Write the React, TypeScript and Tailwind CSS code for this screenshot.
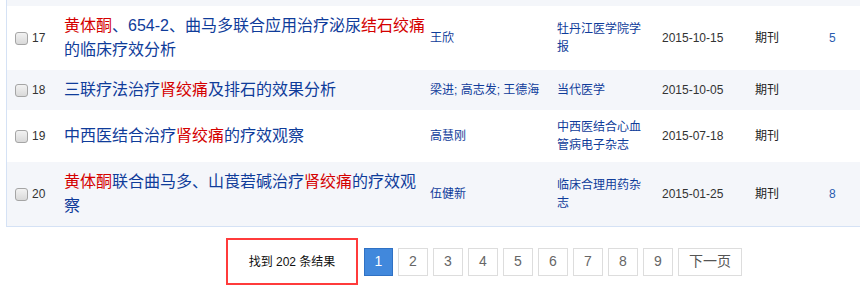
import React from "react";

type Seg = { t: string; red?: boolean };
type Row = {
  n: number;
  title: Seg[];
  author: string;
  journal: string;
  date: string;
  type: string;
  count?: string;
  striped: boolean;
};

const rows: Row[] = [
  {
    n: 17,
    title: [
      { t: "黄体酮", red: true },
      { t: "、654-2、曲马多联合应用治疗泌尿" },
      { t: "结石绞痛", red: true },
      { t: "的临床疗效分析" },
    ],
    author: "王欣",
    journal: "牡丹江医学院学报",
    date: "2015-10-15",
    type: "期刊",
    count: "5",
    striped: false,
  },
  {
    n: 18,
    title: [
      { t: "三联疗法治疗" },
      { t: "肾绞痛", red: true },
      { t: "及排石的效果分析" },
    ],
    author: "梁进; 高志发; 王德海",
    journal: "当代医学",
    date: "2015-10-05",
    type: "期刊",
    striped: true,
  },
  {
    n: 19,
    title: [
      { t: "中西医结合治疗" },
      { t: "肾绞痛", red: true },
      { t: "的疗效观察" },
    ],
    author: "高慧刚",
    journal: "中西医结合心血管病电子杂志",
    date: "2015-07-18",
    type: "期刊",
    striped: false,
  },
  {
    n: 20,
    title: [
      { t: "黄体酮", red: true },
      { t: "联合曲马多、山莨菪碱治疗" },
      { t: "肾绞痛", red: true },
      { t: "的疗效观察" },
    ],
    author: "伍健新",
    journal: "临床合理用药杂志",
    date: "2015-01-25",
    type: "期刊",
    count: "8",
    striped: true,
  },
];

const font = {
  fontFamily: '"Liberation Sans", Arial, "Noto Sans CJK SC", sans-serif',
};

export default function App() {
  return (
    <div className="w-[860px] h-[290px] bg-white overflow-hidden" style={font}>
      <div className="ml-[6px] border-l border-b border-[#d5e2f5]">
        <div className="h-[6px] bg-[#f4f6fa]" />
        {rows.map((r) => (
          <div
            key={r.n}
            className={`flex items-center py-2 ${r.striped ? "bg-[#f4f6fa]" : "bg-white"}`}
          >
            <div className="w-[57px] shrink-0 pl-2 flex items-center gap-[4px]">
              <span className="w-[13px] h-[13px] rounded-[3px] border border-[#a5a5a5] bg-gradient-to-b from-[#f2f2f2] to-[#d9d9d9] shrink-0" />
              <span className="text-[12px] text-[#333]">{r.n}</span>
            </div>
            <div className="w-[366px] shrink-0 pr-[4px] text-[16px] leading-6 text-[#0f3c9a]">
              {r.title.map((s, i) => (
                <span key={i} className={s.red ? "text-[#d40000]" : ""}>
                  {s.t}
                </span>
              ))}
            </div>
            <div className="w-[127px] shrink-0 text-[12px] leading-[18px] text-[#0f3c9a] whitespace-nowrap">
              {r.author}
            </div>
            <div className="w-[105px] shrink-0 pr-[14px] text-[12px] leading-[18px] text-[#0f3c9a]">
              {r.journal}
            </div>
            <div className="w-[93px] shrink-0 text-[12px] leading-[18px] text-[#333]">
              {r.date}
            </div>
            <div className="w-[74px] shrink-0 text-[12px] leading-[18px] text-[#222]">
              {r.type}
            </div>
            <div className="flex-1 text-[12px] leading-[18px] text-[#2a5cb0]">
              {r.count}
            </div>
          </div>
        ))}
      </div>
      <div className="mt-[11px] ml-[226px] flex items-center gap-[5px]">
        <div className="w-[132px] h-[47px] border-2 border-[#ff3b3b] flex items-center justify-center text-[12px] text-[#111] mr-[1px]">
          找到 202 条结果
        </div>
        <div className="w-[29px] h-[28px] flex items-center justify-center border border-[#2f71c4] bg-[#4188dc] text-white text-[14px]">
          1
        </div>
        {[2, 3, 4, 5, 6, 7, 8, 9].map((p) => (
          <div
            key={p}
            className="w-[30px] h-[28px] flex items-center justify-center border border-[#dddddd] bg-white text-[#666] text-[14px]"
          >
            {p}
          </div>
        ))}
        <div className="w-[64px] h-[28px] flex items-center justify-center border border-[#dddddd] bg-white text-[#555] text-[14px]">
          下一页
        </div>
      </div>
    </div>
  );
}
